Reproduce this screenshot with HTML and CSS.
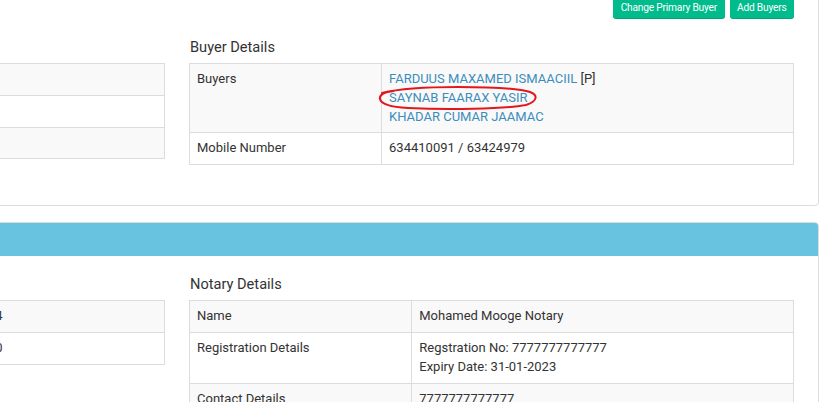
FILE: index.html
```html
<!DOCTYPE html>
<html lang="en">
<head>
  <meta charset="UTF-8" />
  <title>Property Transfer</title>
  <meta name="viewport" content="width=device-width, initial-scale=1">
  <link rel="stylesheet" href="styles.css">
</head>
<body>
  <div class="content">

    <div class="card">
      <div class="card-body">
        <div class="toolbar">
          <button class="btn">Change Primary Buyer</button>
          <button class="btn">Add Buyers</button>
        </div>
        <div class="row">
          <div class="col">
            <h4>Property Details</h4>
            <table class="details">
              <tr><td class="label">Property No</td><td>HG-00231</td></tr>
              <tr><td class="label">Location</td><td>Hargeisa</td></tr>
              <tr><td class="label">Area</td><td>20 x 20</td></tr>
            </table>
          </div>
          <div class="col">
            <h4>Buyer Details</h4>
            <table class="details buyers">
              <tr>
                <td class="label">Buyers</td>
                <td>
                  <a href="#">FARDUUS MAXAMED ISMAACIIL</a> [P]<br>
                  <span class="marked">
                    <a href="#">SAYNAB FAARAX YASIR</a>
                    <svg class="scribble" width="164" height="28" viewBox="0 0 164 28">
                      <path d="M4 7 C20 3, 50 1, 80 1 C110 1, 140 2, 152 6 C160 9, 160 15, 148 19 C125 23, 70 24, 30 22 C12 21, 3 18, 2 13 C1 9, 6 6, 16 5" />
                    </svg>
                  </span><br>
                  <a href="#">KHADAR CUMAR JAAMAC</a>
                </td>
              </tr>
              <tr><td class="label">Mobile Number</td><td>634410091 / 63424979</td></tr>
            </table>
          </div>
        </div>
      </div>
    </div>

    <div class="card">
      <div class="card-header">Transfer Information</div>
      <div class="card-body">
        <div class="row">
          <div class="col">
            <h4>Transfer Details</h4>
            <table class="details dates">
              <tr><td class="label">Transfer Date</td><td>12-05-2024</td></tr>
              <tr><td class="label">Agreement Date</td><td>18-06-2020</td></tr>
            </table>
          </div>
          <div class="col">
            <h4>Notary Details</h4>
            <table class="details notary">
              <tr><td class="label">Name</td><td>Mohamed Mooge Notary</td></tr>
              <tr>
                <td class="label">Registration Details</td>
                <td>Regstration No: 7777777777777<br>Expiry Date: 31-01-2023</td>
              </tr>
              <tr><td class="label">Contact Details</td><td>7777777777777</td></tr>
            </table>
          </div>
        </div>
      </div>
    </div>

  </div>
</body>
</html>
```

FILE: styles.css
```css
body {
  font-family: Roboto, 'Liberation Sans', sans-serif;
  font-size: 13px;
  line-height: 18.8px;
  color: #333;
  background: #fff;
  margin: 0;
  overflow: hidden;
}
.content {
  width: 1279px;
  margin: -15px 0 0 -460px;
}
.card {
  background: #fff;
  border: 1px solid #dcdcdc;
  border-radius: 4px;
  margin-bottom: 16px;
  overflow: hidden;
}
.card-header {
  background: #67c3df;
  color: #67c3df;
  height: 33px;
  line-height: 33px;
  padding-left: 20px;
}
.card-body {
  padding: 10px 24px 20px 20px;
}
.card-header + .card-body {
  padding-top: 20px;
}
.toolbar {
  display: flex;
  justify-content: flex-end;
  gap: 5px;
}
.btn {
  font-family: Roboto, 'Liberation Sans', sans-serif;
  font-size: 10.2px;
  letter-spacing: -0.2px;
  height: 22px;
  padding: 0 7.5px;
  border: none;
  border-radius: 3px;
  background: #00bc8c;
  color: #fff;
  box-shadow: 0 1px 0 #00a57b;
  cursor: pointer;
}
.toolbar + .row h4 {
  margin-top: 21px;
}
.row {
  display: flex;
  gap: 24px;
}
.col {
  flex: 1;
}
.col:first-child {
  flex: 0 0 604px;
}
h4 {
  font-size: 14.6px;
  font-weight: 400;
  line-height: 1.1;
  margin: 0 0 8px 1px;
  color: #333;
}
.details {
  width: 100%;
  border-collapse: collapse;
  margin-bottom: 20px;
}
.details td {
  border: 1px solid #dcdcdc;
  padding: 6px 7px;
  vertical-align: top;
}
.details tr:nth-child(odd) td {
  background: #f9f9f9;
}
.details .label {
  width: 50%;
}
.buyers .label {
  width: 31.8%;
}
.notary .label {
  width: 36.8%;
}
.dates .label {
  width: 61%;
}
a {
  color: #3c8dbc;
  text-decoration: none;
}
.marked {
  position: relative;
}
.scribble {
  position: absolute;
  left: -11px;
  top: -4px;
  overflow: visible;
}
.scribble path {
  fill: none;
  stroke: #e3161b;
  stroke-width: 2;
  stroke-linecap: round;
}
```
